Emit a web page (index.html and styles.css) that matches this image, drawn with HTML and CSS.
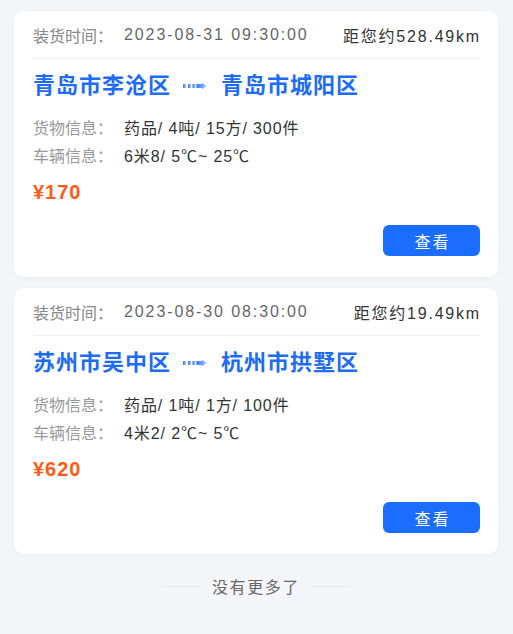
FILE: index.html
```html
<!DOCTYPE html>
<html lang="zh-CN">
<head>
<meta charset="utf-8">
<title>货源列表</title>
<link rel="stylesheet" href="styles.css">
</head>
<body>
<div class="list">
  <div class="card">
    <div class="card-head">
      <div class="load-time"><span class="head-label">装货时间：</span><span class="time">2023-08-31 09:30:00</span></div>
      <div class="distance">距您约528.49km</div>
    </div>
    <div class="route">
      <span class="city">青岛市李沧区</span>
      <svg class="arrow" width="24" height="8" viewBox="0 0 24 8">
        <defs><linearGradient id="g1" x1="0" x2="1" y1="0" y2="0"><stop offset="0" stop-color="#2f74ff"/><stop offset="1" stop-color="#a9c8ff"/></linearGradient></defs>
        <g fill="url(#g1)"><rect x="0" y="2" width="3" height="4"/><rect x="5" y="2" width="3" height="4"/><rect x="9.5" y="2" width="3" height="4"/><polygon points="13.5,2 19,2 19,0.8 23.5,4 19,7.2 19,6 13.5,6"/></g>
      </svg>
      <span class="city">青岛市城阳区</span>
    </div>
    <div class="info-row"><span class="info-label">货物信息：</span><span class="info-value">药品/ 4吨/ 15方/ 300件</span></div>
    <div class="info-row"><span class="info-label">车辆信息：</span><span class="info-value">6米8/ 5℃~ 25℃</span></div>
    <div class="price">¥170</div>
    <div class="actions"><button class="btn">查看</button></div>
  </div>
  <div class="card">
    <div class="card-head">
      <div class="load-time"><span class="head-label">装货时间：</span><span class="time">2023-08-30 08:30:00</span></div>
      <div class="distance">距您约19.49km</div>
    </div>
    <div class="route">
      <span class="city">苏州市吴中区</span>
      <svg class="arrow" width="24" height="8" viewBox="0 0 24 8">
        <defs><linearGradient id="g2" x1="0" x2="1" y1="0" y2="0"><stop offset="0" stop-color="#2f74ff"/><stop offset="1" stop-color="#a9c8ff"/></linearGradient></defs>
        <g fill="url(#g2)"><rect x="0" y="2" width="3" height="4"/><rect x="5" y="2" width="3" height="4"/><rect x="9.5" y="2" width="3" height="4"/><polygon points="13.5,2 19,2 19,0.8 23.5,4 19,7.2 19,6 13.5,6"/></g>
      </svg>
      <span class="city">杭州市拱墅区</span>
    </div>
    <div class="info-row"><span class="info-label">货物信息：</span><span class="info-value">药品/ 1吨/ 1方/ 100件</span></div>
    <div class="info-row"><span class="info-label">车辆信息：</span><span class="info-value">4米2/ 2℃~ 5℃</span></div>
    <div class="price">¥620</div>
    <div class="actions"><button class="btn">查看</button></div>
  </div>
  <div class="no-more"><span class="line"></span><span class="no-more-text">没有更多了</span><span class="line"></span></div>
</div>
</body>
</html>
```
FILE: styles.css
```css
html, body {
  margin: 0;
  padding: 0;
  background: #f4f5f8;
}
body {
  font-family: "Liberation Sans", "Noto Sans CJK SC", sans-serif;
  color: #333;
}
.list {
  padding: 11px 15px 0 14px;
}
.card {
  background: #fff;
  border-radius: 10px;
  padding: 0 18px 21px 19px;
  margin-bottom: 11px;
  box-shadow: 0 2px 6px rgba(0, 0, 0, 0.03);
}
.card-head {
  height: 48px;
  padding-top: 1px;
  box-sizing: border-box;
  display: flex;
  align-items: center;
  justify-content: space-between;
  border-bottom: 1px solid #eeeeee;
}
.load-time {
  display: flex;
  align-items: center;
}
.head-label {
  font-size: 16px;
  color: #888;
  width: 91px;
}
.time {
  font-size: 16px;
  letter-spacing: 1.9px;
  color: #666;
}
.distance {
  font-size: 16px;
  letter-spacing: 1.8px;
  margin-right: -1px;
  color: #333;
}
.route {
  display: flex;
  align-items: center;
  height: 28px;
  margin-top: 13px;
  margin-bottom: 13px;
}
.city {
  font-size: 22px;
  letter-spacing: 1px;
  font-weight: 600;
  color: #1d6cf5;
  line-height: 28px;
}
.arrow {
  margin: 0 14px 0 12px;
  display: block;
}
.info-row {
  display: flex;
  align-items: center;
  height: 28px;
}
.info-label {
  width: 91px;
  font-size: 16px;
  color: #999;
}
.info-value {
  font-size: 16px;
  letter-spacing: 0.9px;
  color: #333;
}
.price {
  margin-top: 9px;
  height: 28px;
  line-height: 28px;
  font-size: 20px;
  font-weight: 700;
  letter-spacing: 1px;
  color: #ff5a16;
}
.actions {
  display: flex;
  justify-content: flex-end;
  margin-top: 19px;
}
.btn {
  width: 97px;
  height: 31px;
  border: none;
  border-radius: 6px;
  background: #1a6dff;
  color: #fff;
  font-family: "Noto Sans CJK SC", sans-serif;
  font-size: 16px;
  letter-spacing: 2px;
  padding: 0 0 0 2px;
}
.no-more {
  height: 42px;
  display: flex;
  align-items: center;
  justify-content: center;
  gap: 12px;
}
.line {
  width: 34px;
  height: 1px;
  background: #e2e3e6;
}
.no-more-text {
  font-size: 16px;
  letter-spacing: 1.6px;
  color: #666;
}
```
